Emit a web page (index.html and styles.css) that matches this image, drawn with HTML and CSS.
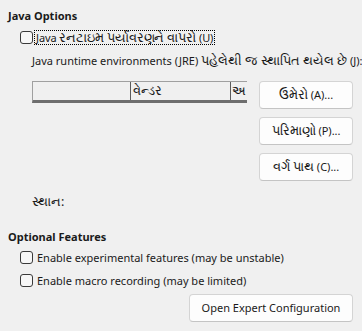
FILE: index.html
```html
<!DOCTYPE html>
<html lang="gu">
<head>
<meta charset="utf-8">
<title>Java Options</title>
<link rel="stylesheet" href="styles.css">
</head>
<body>
<div class="page">
  <h2 class="section-title">Java Options</h2>
  <div class="check-row">
    <span class="box"></span>
    <span class="label focus">Java <span class="gu">રનટાઇમ પર્યાવરણને વાપરો</span> (U)</span>
  </div>
  <div class="jre-label">Java runtime environments (JRE) <span class="gu">પહેલેથી જ સ્થાપિત થયેલ છે</span> (J):</div>
  <div class="jre-area">
    <div class="table">
      <div class="th c1"></div>
      <div class="th c2"><span class="gu">વેન્ડર</span></div>
      <div class="th c3"><span class="gu">અ</span></div>
    </div>
    <div class="buttons">
      <button class="btn"><span class="gu">ઉમેરો</span> (A)...</button>
      <button class="btn"><span class="gu">પરિમાણો</span> (P)...</button>
      <button class="btn"><span class="gu">વર્ગ પાથ</span> (C)...</button>
    </div>
  </div>
  <div class="location"><span class="gu">સ્થાન:</span></div>
  <h2 class="section-title second">Optional Features</h2>
  <div class="check-row opt">
    <span class="box"></span>
    <span class="label">Enable experimental features (may be unstable)</span>
  </div>
  <div class="check-row opt">
    <span class="box"></span>
    <span class="label">Enable macro recording (may be limited)</span>
  </div>
  <div class="footer">
    <button class="btn wide">Open Expert Configuration</button>
  </div>
</div>
</body>
</html>
```

FILE: styles.css
```css
html, body {
  margin: 0;
  padding: 0;
  background: #f0f0f0;
}
body {
  font-family: "Noto Sans", "Open Sans", sans-serif;
  font-size: 11px;
  color: #1a1a1a;
  width: 362px;
  height: 331px;
  overflow: hidden;
}
.gu {
  font-size: 12.5px;
}
.page {
  padding-top: 8px;
}
.section-title {
  margin: 0;
  padding-left: 8px;
  font-size: 11px;
  font-weight: bold;
  line-height: 16px;
  height: 16px;
}
.section-title.second {
  margin-top: 19px;
}
.check-row {
  display: flex;
  align-items: flex-start;
  margin-top: 5px;
  padding-left: 20px;
  height: 17px;
}
.box {
  box-sizing: border-box;
  width: 13px;
  height: 13px;
  margin-top: 2px;
  border: 1px solid #3a3a3a;
  border-radius: 3px;
  background: #f7f7f7;
  flex: none;
}
.label {
  margin-left: 4px;
  line-height: 17px;
  white-space: nowrap;
}
.label.focus {
  margin-left: 2px;
  margin-top: 2px;
  line-height: 13px;
  height: 13px;
  padding: 0 1px 0 1px;
  outline: 1px dotted #000;
  letter-spacing: -0.1px;
}
.check-row.opt {
  margin-top: 6px;
}
.section-title.second + .check-row.opt {
  margin-top: 4px;
}
.jre-label {
  margin-top: 7px;
  padding-left: 32px;
  line-height: 16px;
  height: 16px;
  white-space: nowrap;
}
.jre-area {
  display: flex;
  align-items: flex-start;
  margin-top: 12px;
  padding-left: 32px;
}
.table {
  display: flex;
  width: 215px;
  height: 22px;
  box-sizing: border-box;
  border-top: 1px solid #a0a0a0;
  border-left: 1px solid #a0a0a0;
  border-bottom: 3px solid #6e6e6e;
  background: #f0f0f0;
}
.th {
  box-sizing: border-box;
  height: 18px;
  line-height: 17px;
  padding-left: 2px;
  white-space: nowrap;
  overflow: hidden;
}
.c1 { width: 98px; border-right: 1px solid #5c5c5c; }
.c2 { width: 100px; border-right: 1px solid #5c5c5c; }
.c3 { width: 15px; padding-left: 1px; }
.buttons {
  display: flex;
  flex-direction: column;
  gap: 8px;
  margin-left: 12px;
}
.btn {
  box-sizing: border-box;
  width: 94px;
  height: 28px;
  padding: 0;
  font-family: inherit;
  font-size: 11px;
  line-height: 16px;
  color: #1a1a1a;
  background: #fdfdfd;
  border: 1px solid #d4d4d4;
  border-bottom-color: #c4c4c4;
  border-radius: 4px;
}
.location {
  margin-top: 13px;
  padding-left: 32px;
  line-height: 16px;
  height: 16px;
}
.footer {
  display: flex;
  justify-content: flex-end;
  padding-right: 9px;
  margin-top: 5px;
}
.btn.wide {
  width: 164px;
}
```
